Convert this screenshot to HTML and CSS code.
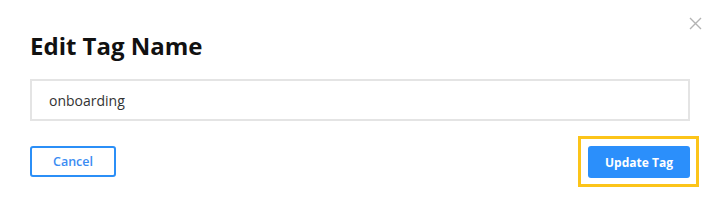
FILE: index.html
```html
<!DOCTYPE html>
<html lang="en">

<head>
	<meta charset="UTF-8">
	<title>Edit Tag Name</title>

	<link rel="stylesheet" href="styles.css">
</head>

<body>
	<div class="modal">
		<button class="close" type="button" aria-label="Close">
			<svg width="13" height="13" viewBox="0 0 13 13">
				<path d="M1 1 L12 12 M12 1 L1 12" stroke="#b3b3b3" stroke-width="1.4" fill="none" />
			</svg>
		</button>
		<h1 class="title">Edit Tag Name</h1>
		<input class="tag-input" type="text" value="onboarding">
		<div class="actions">
			<button class="btn btn-outline" type="button">Cancel</button>
			<span class="highlight">
				<button class="btn btn-primary" type="button">Update Tag</button>
			</span>
		</div>
	</div>
</body>

</html>
```

FILE: styles.css
```css
html {
	font-family: "Open Sans", sans-serif;
	font-size: 14px;
}

body {
	margin: 0;
	background-color: #FFF;
}

.modal {
	position: relative;
	padding: 31px 30px 0 30px;
}

/* la x de cerrar va encima de todo */
.close {
	position: absolute;
	top: 17px;
	right: 18px;
	padding: 0;
	border: none;
	background: none;
	line-height: 0;
}

.title {
	margin: 0 0 18px 0;
	font-size: 24px;
	line-height: 30px;
	font-weight: 700;
	color: #111;
}

.tag-input {
	display: block;
	box-sizing: border-box;
	width: 100%;
	height: 42px;
	padding: 0 17px;
	font-family: inherit;
	font-size: 14px;
	color: #333;
	border: 2px solid #e4e4e4;
	border-radius: 0;
	outline: none;
}

.actions {
	display: flex;
	align-items: center;
	justify-content: space-between;
	margin-top: 15px;
	margin-right: -9px;
}

.btn {
	height: 32px;
	font-family: inherit;
	font-size: 12.5px;
	font-weight: 600;
	border-radius: 3px;
	cursor: pointer;
}

.btn-outline {
	width: 86px;
	height: 31px;
	color: #3b8cf2;
	background-color: #FFF;
	border: 2px solid #2b8ff7;
}

.btn-primary {
	width: 102px;
	font-size: 12px;
	font-weight: 700;
	color: #FFF;
	background-color: #2b8ffb;
	border: none;
}

.highlight {
	display: block;
	padding: 7px 6px 6px 7px;
	border: 3px solid #fcc419;
	line-height: 0;
}
```
